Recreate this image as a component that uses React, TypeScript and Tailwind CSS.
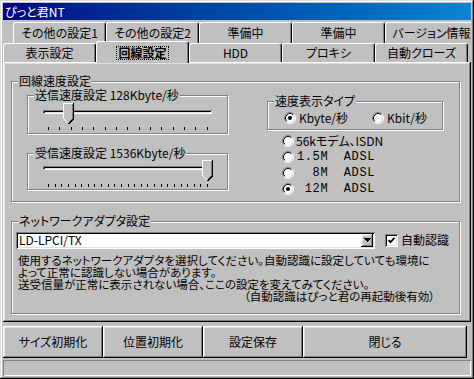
import React from 'react'

const raised = 'shadow-[inset_-1px_-1px_0_#000,inset_1px_1px_0_#fff,inset_-2px_-2px_0_#808080,inset_2px_2px_0_#dfdfdf]'
const sunken = 'shadow-[inset_1px_1px_0_#808080,inset_-1px_-1px_0_#fff,inset_2px_2px_0_#000,inset_-2px_-2px_0_#dfdfdf]'
const etched = 'border border-[#808080] shadow-[inset_1px_1px_0_#fff,1px_1px_0_#fff]'
const mono = "font-['Liberation_Mono',monospace] tracking-[0.6px] whitespace-pre"

function Group({ label, className, children }: { label: string; className: string; children?: React.ReactNode }) {
  return (
    <div className={`relative ${etched} ${className}`}>
      <span className="absolute -top-[7px] left-[6px] bg-[#c0c0c0] px-px leading-[12px] whitespace-nowrap">{label}</span>
      {children}
    </div>
  )
}

function Radio({ checked }: { checked?: boolean }) {
  return (
    <svg width="12" height="12" viewBox="0 0 12 12" className="shrink-0">
      <circle cx="6" cy="6" r="5" fill="#fff" />
      <path d="M2.11 9.89 A5.5 5.5 0 0 1 9.89 2.11" stroke="#808080" fill="none" />
      <path d="M9.89 2.11 A5.5 5.5 0 0 1 2.11 9.89" stroke="#fff" fill="none" />
      <path d="M2.82 9.18 A4.5 4.5 0 0 1 9.18 2.82" stroke="#000" fill="none" />
      <path d="M9.18 2.82 A4.5 4.5 0 0 1 2.82 9.18" stroke="#dfdfdf" fill="none" />
      {checked && <circle cx="6" cy="6" r="2" fill="#000" />}
    </svg>
  )
}

function Thumb({ className }: { className: string }) {
  return (
    <svg className={`absolute ${className}`} width="11" height="21" viewBox="0 0 11 21" shapeRendering="crispEdges">
      <polygon points="0,0 11,0 11,16 5.5,21 0,16" fill="#c0c0c0" />
      <path d="M0.5 16 V0.5 H10" stroke="#fff" fill="none" />
      <path d="M0.5 15.5 L5.5 20.5" stroke="#fff" fill="none" />
      <path d="M9.5 1 V15.5 L5.5 19.5" stroke="#808080" fill="none" />
      <path d="M10.5 0 V16 L5.5 21" stroke="#000" fill="none" />
    </svg>
  )
}

function Ticks({ n, className }: { n: number; className: string }) {
  return (
    <div className={`ml-[20px] flex w-[160px] justify-between ${className}`}>
      {Array.from({ length: n }).map((_, i) => (
        <span key={i} className="h-[3px] w-px bg-black" />
      ))}
    </div>
  )
}

function Tab({ label, selected }: { label: string; selected?: boolean }) {
  return (
    <div
      className={`relative flex w-[93px] shrink-0 items-center justify-center whitespace-nowrap rounded-t-[3px] border-l border-r border-t border-white border-r-black bg-[#c0c0c0] shadow-[inset_-1px_0_0_#808080] ${
        selected ? 'z-10 -mb-px h-[22px]' : 'h-full'
      }`}
    >
      {selected ? (
        <span className="px-px font-bold leading-[12px] outline-1 outline-dotted outline-black">{label}</span>
      ) : (
        label
      )}
    </div>
  )
}

const buttons = [
  { label: 'サイズ初期化', w: 'w-[100px]' },
  { label: '位置初期化', w: 'w-[100px]' },
  { label: '設定保存', w: 'w-[100px]' },
  { label: '閉じる', w: 'w-[164px]' },
]

export default function App() {
  return (
    <div className="h-[379px] w-[474px] overflow-hidden bg-[#c0c0c0] font-['Noto_Sans_CJK_JP',sans-serif] text-[12px] text-black [font-feature-settings:'palt'] shadow-[inset_-1px_-1px_0_#000,inset_1px_1px_0_#dfdfdf,inset_-2px_-2px_0_#808080,inset_2px_2px_0_#fff]">
      <div className="flex h-full flex-col p-[3px]">
        <div className="flex h-[17px] items-center bg-gradient-to-r from-[#000080] to-[#1084d0] pl-[2px] leading-[12px] text-white">ぴっと君NT</div>

        <div className="mt-[2px] flex h-[21px] items-end overflow-hidden pl-[10px]">
          {['その他の設定1', 'その他の設定2', '準備中', '準備中', 'バージョン情報'].map((t, i) => (
            <Tab key={i} label={t} />
          ))}
        </div>
        <div className="flex h-[19px] items-end">
          <Tab label="表示設定" />
          <Tab label="回線設定" selected />
          <Tab label="HDD" />
          <Tab label="プロキシ" />
          <Tab label="自動クローズ" />
        </div>

        <div className={`h-[260px] shrink-0 pl-[8px] pt-[19px] ${raised}`}>
          <Group label="回線速度設定" className="flex h-[121px] w-[449px] items-start">
            <div className="ml-[15px] mt-[13px] flex flex-col">
              <Group label="送信速度設定 128Kbyte/秒" className="h-[39px] w-[201px]">
                <div className={`ml-[15px] mt-[14px] h-[4px] w-[169px] ${sunken}`} />
                <Ticks n={15} className="mt-[13px]" />
                <Thumb className="left-[35px] top-[7px]" />
              </Group>
              <Group label="受信速度設定 1536Kbyte/秒" className="mt-[19px] h-[37px] w-[201px]">
                <div className={`ml-[15px] mt-[12px] h-[4px] w-[169px] ${sunken}`} />
                <Ticks n={25} className="mt-[14px]" />
                <Thumb className="left-[174px] top-[6px]" />
              </Group>
            </div>

            <div className="ml-[39px] mt-[19px] flex flex-col">
              <Group label="速度表示タイプ" className="flex h-[29px] w-[176px] items-center pt-[4px]">
                <div className="ml-[16px] flex items-center gap-[3px]">
                  <Radio checked />
                  <span>Kbyte/秒</span>
                </div>
                <div className="ml-[24px] flex items-center gap-[3px]">
                  <Radio />
                  <span>Kbit/秒</span>
                </div>
              </Group>
              <div className="ml-[15px] mt-[3px] flex flex-col">
                <div className="flex h-[16px] items-center gap-[2px]">
                  <Radio />
                  <span>56kモデム、ISDN</span>
                </div>
                <div className="flex h-[16px] items-center gap-[3px]">
                  <Radio />
                  <span className={mono}>1.5M  ADSL</span>
                </div>
                <div className="flex h-[16px] items-center gap-[3px]">
                  <Radio />
                  <span className={mono}>  8M  ADSL</span>
                </div>
                <div className="flex h-[16px] items-center gap-[3px]">
                  <Radio checked />
                  <span className={mono}> 12M  ADSL</span>
                </div>
              </div>
            </div>
          </Group>

          <Group label="ネットワークアダプタ設定" className="mt-[19px] h-[93px] w-[449px]">
            <div className="ml-[4px] mt-[9px] flex items-center">
              <div className={`flex h-[17px] w-[359px] items-center justify-between bg-white p-[2px] ${sunken}`}>
                <span className="pl-px leading-[12px]">LD-LPCI/TX</span>
                <span className={`flex h-[13px] w-[12px] items-center justify-center bg-[#c0c0c0] ${raised}`}>
                  <svg width="7" height="4" viewBox="0 0 7 4" shapeRendering="crispEdges">
                    <path d="M0 0 H7 L3.5 4 Z" fill="#000" />
                  </svg>
                </span>
              </div>
              <span className={`ml-[10px] flex h-[13px] w-[13px] items-center justify-center bg-white ${sunken}`}>
                <svg width="7" height="7" viewBox="0 0 7 7">
                  <path d="M0.5 3 L2.5 5.2 L6.5 0.8" stroke="#000" strokeWidth="1.8" fill="none" />
                </svg>
              </span>
              <span className="ml-[3px]">自動認識</span>
            </div>
            <div className="ml-[6px] mt-[5px] whitespace-nowrap text-[11.5px] leading-[12px]">
              <div>使用するネットワークアダプタを選択してください。自動認識に設定していても環境に</div>
              <div>よって正常に認識しない場合があります。</div>
              <div>送受信量が正常に表示されない場合、ここの設定を変えてみてください。</div>
              <div className="pl-[226px]">（自動認識はぴっと君の再起動後有効）</div>
            </div>
          </Group>
        </div>

        <div className="mt-[4px] flex h-[32px]">
          {buttons.map((b) => (
            <div key={b.label} className={`flex h-full items-center justify-center ${b.w} ${raised}`}>
              {b.label}
            </div>
          ))}
        </div>

        <div className="mt-[2px] h-[16px] shadow-[inset_1px_1px_0_#808080,inset_-1px_-1px_0_#fff]" />
      </div>
    </div>
  )
}
